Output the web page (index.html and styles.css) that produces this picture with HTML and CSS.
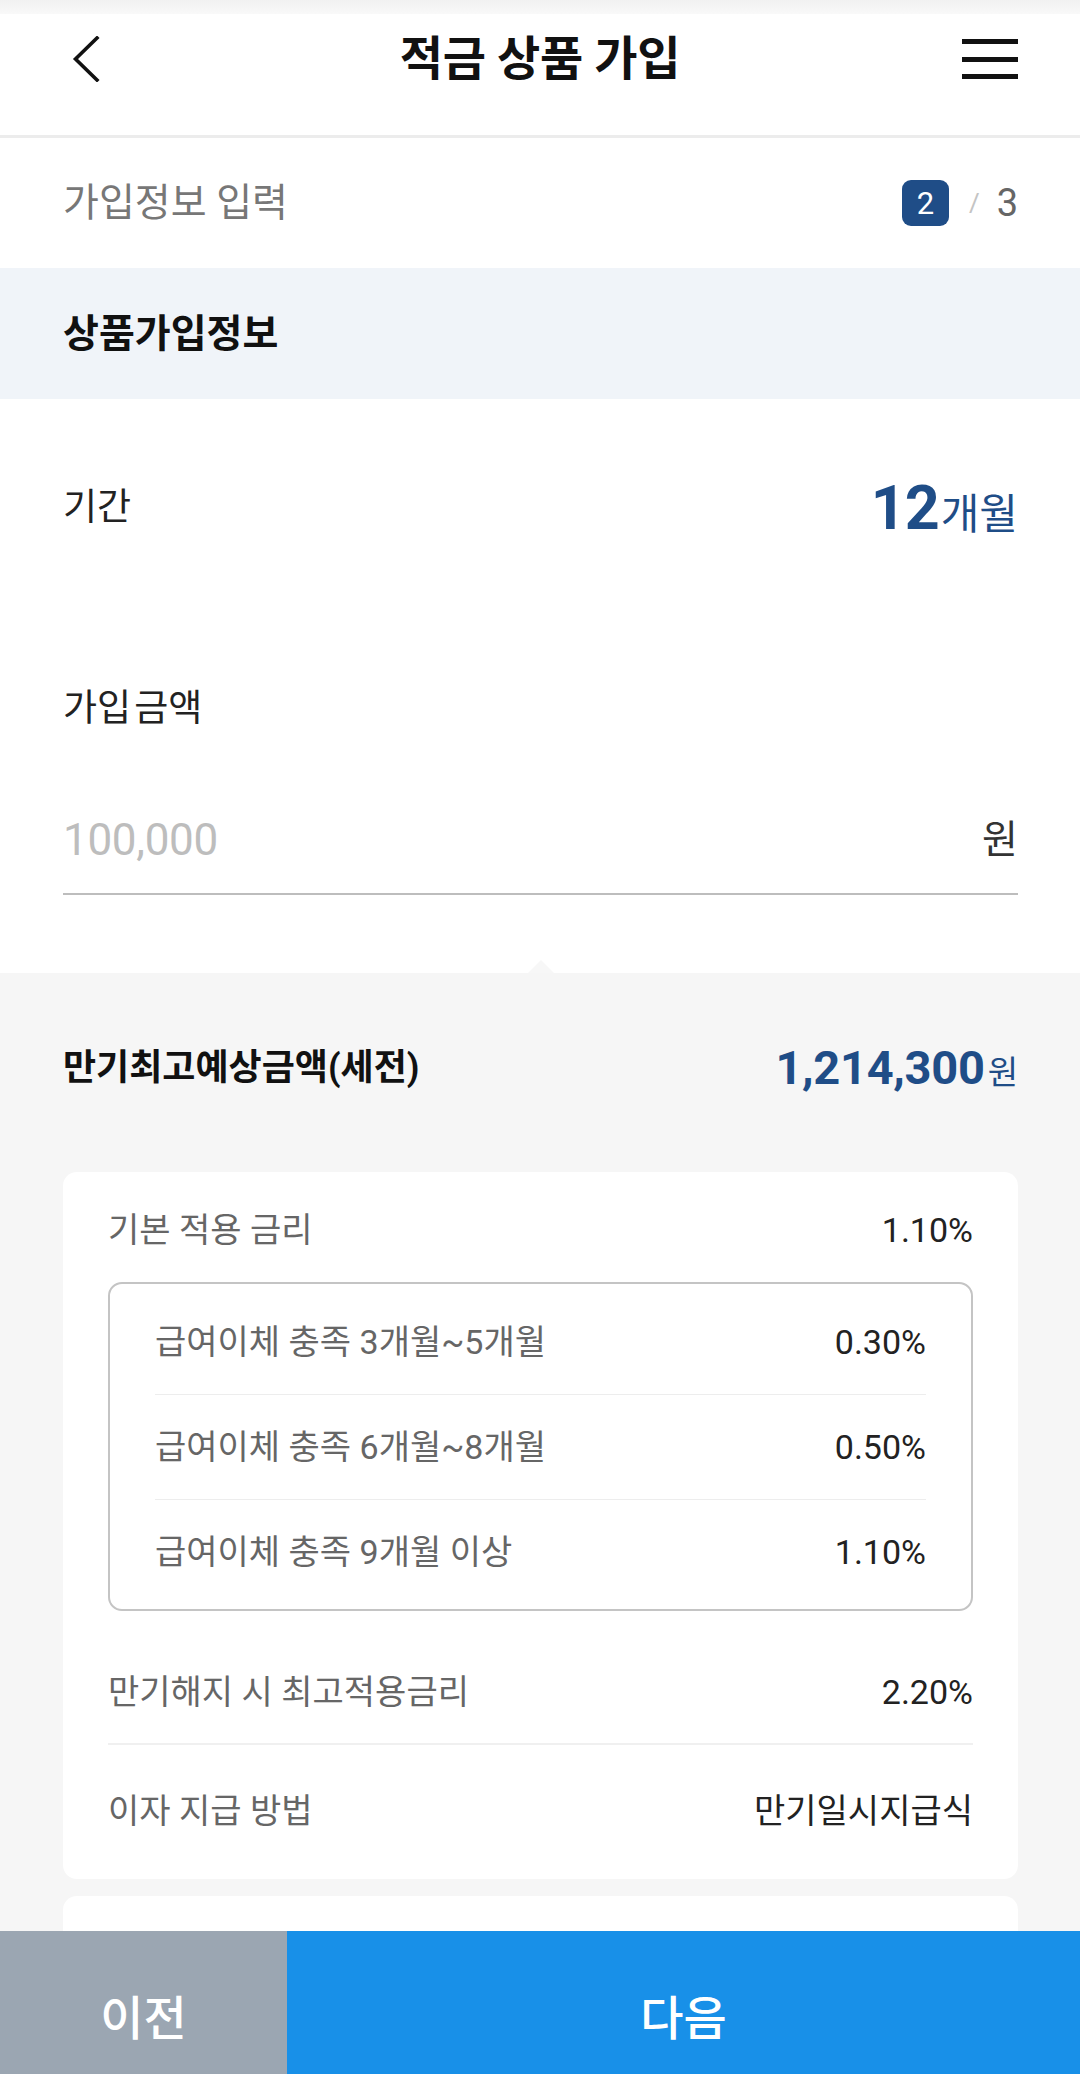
FILE: index.html
```html
<!DOCTYPE html>
<html lang="ko">
<head>
<meta charset="utf-8">
<title>적금 상품 가입</title>
<link rel="stylesheet" href="styles.css">
</head>
<body>
<div class="statusbar"></div>
<header class="topbar">
  <span class="icon back">
    <svg width="28" height="46" viewBox="0 0 28 46" aria-hidden="true"><path d="M25 2 L3.5 23 L25 44" fill="none" stroke="#111" stroke-width="3.6" stroke-linecap="square" stroke-linejoin="miter"/></svg>
  </span>
  <h1 class="title">적금 상품 가입</h1>
  <span class="icon menu">
    <svg width="56" height="40" viewBox="0 0 56 40" aria-hidden="true"><rect x="0" y="0" width="56" height="5" fill="#111"/><rect x="0" y="18" width="56" height="5" fill="#111"/><rect x="0" y="35" width="56" height="5" fill="#111"/></svg>
  </span>
</header>

<div class="step-row">
  <span class="step-label">가입정보 입력</span>
  <div class="step-count">
    <span class="step-badge">2</span>
    <span class="step-slash">/</span>
    <span class="step-total">3</span>
  </div>
</div>

<div class="section-band"><h2 class="section-title">상품가입정보</h2></div>

<section class="form">
  <div class="period-row">
    <span class="field-label">기간</span>
    <span class="period-value"><span class="num">12</span><span class="unit">개월</span></span>
  </div>
  <div class="amount-label">가입 금액</div>
  <div class="amount-input">
    <span class="placeholder">100,000</span>
    <span class="won">원</span>
  </div>
</section>

<section class="summary">
  <div class="maturity-row">
    <span class="maturity-label">만기최고예상금액(세전)</span>
    <span class="maturity-amount"><span class="num">1,214,300</span><span class="unit">원</span></span>
  </div>

  <div class="card">
    <div class="rate-row first">
      <span class="rate-label">기본 적용 금리</span>
      <span class="rate-value">1.10%</span>
    </div>
    <div class="bonus-box">
      <div class="bonus-row"><span class="rate-label">급여이체 충족 3개월~5개월</span><span class="rate-value">0.30%</span></div>
      <div class="bonus-row"><span class="rate-label">급여이체 충족 6개월~8개월</span><span class="rate-value">0.50%</span></div>
      <div class="bonus-row"><span class="rate-label">급여이체 충족 9개월 이상</span><span class="rate-value">1.10%</span></div>
    </div>
    <div class="rate-row max">
      <span class="rate-label">만기해지 시 최고적용금리</span>
      <span class="rate-value">2.20%</span>
    </div>
    <div class="rate-row last">
      <span class="rate-label">이자 지급 방법</span>
      <span class="rate-value ko">만기일시지급식</span>
    </div>
  </div>

  <div class="card card-next"></div>
</section>

<footer class="actions">
  <div class="btn btn-prev">이전</div>
  <div class="btn btn-next">다음</div>
</footer>
</body>
</html>
```

FILE: styles.css
```css
* { box-sizing: border-box; }

html, body {
  margin: 0;
  padding: 0;
}

body {
  width: 1080px;
  font-family: Roboto, "Noto Sans CJK KR", sans-serif;
  color: #222;
  background: #f6f6f6;
}

.statusbar {
  height: 14px;
  background: linear-gradient(#f1f1f1, #f9f9f9);
}

/* header */
.topbar {
  height: 124px;
  padding: 0 62px 31px 62px;
  background: #fff;
  border-bottom: 3px solid #ececec;
  display: grid;
  grid-template-columns: 1fr auto 1fr;
  align-items: center;
}

.icon {
  display: flex;
  align-items: center;
}

.icon.back {
  padding-left: 10px;
}

.icon.menu {
  justify-content: flex-end;
}

.title {
  margin: 0;
  font-size: 47px;
  font-weight: 700;
  line-height: 58px;
  color: #111;
  letter-spacing: -0.3px;
}

/* step indicator */
.step-row {
  height: 130px;
  padding: 0 62px 0 63px;
  background: #fff;
  display: flex;
  align-items: center;
  justify-content: space-between;
}

.step-label {
  font-size: 39px;
  line-height: 46px;
  color: #777;
}

.step-count {
  display: flex;
  align-items: center;
}

.step-badge {
  width: 47px;
  height: 46px;
  border-radius: 9px;
  background: #1f4d87;
  color: #fff;
  font-size: 31px;
  display: flex;
  align-items: center;
  justify-content: center;
}

.step-slash {
  font-size: 26px;
  color: #c4c4c4;
  margin: 0 17px 0 20px;
}

.step-total {
  font-size: 38px;
  color: #666;
  line-height: 44px;
}

/* section band */
.section-band {
  height: 131px;
  padding: 0 63px;
  background: #f0f4f9;
  display: flex;
  align-items: center;
}

.section-title {
  margin: 0;
  font-size: 39px;
  font-weight: 700;
  line-height: 46px;
  color: #111;
}

/* form */
.form {
  background: #fff;
  padding: 77px 62px 78px 63px;
}

.period-row {
  height: 64px;
  display: flex;
  align-items: center;
  justify-content: space-between;
}

.field-label {
  font-size: 37px;
  line-height: 44px;
  color: #222;
}

.period-value {
  display: flex;
  align-items: baseline;
  color: #1f4d87;
}

.period-value .num {
  font-size: 61px;
  font-weight: 700;
  line-height: 64px;
  letter-spacing: -1px;
}

.period-value .unit {
  font-size: 42px;
  margin-left: 2px;
}

.amount-label {
  margin-top: 147px;
  font-size: 37px;
  line-height: 44px;
  color: #222;
  word-spacing: -6px;
}

.amount-input {
  margin-top: 81px;
  height: 83px;
  padding-bottom: 25px;
  border-bottom: 2px solid #bdbdbd;
  display: flex;
  align-items: center;
  justify-content: space-between;
}

.placeholder {
  font-size: 44px;
  line-height: 56px;
  color: #bdbdbd;
  letter-spacing: -0.3px;
}

.won {
  font-size: 39px;
  line-height: 56px;
  color: #333;
}

/* summary */
.summary {
  position: relative;
  background: #f6f6f6;
  padding: 67px 62px 0 63px;
}

.summary::before {
  content: "";
  position: absolute;
  top: -13px;
  left: 528px;
  width: 0;
  height: 0;
  border-left: 13px solid transparent;
  border-right: 13px solid transparent;
  border-bottom: 13px solid #f7f7f7;
}

.maturity-row {
  height: 56px;
  display: flex;
  align-items: center;
  justify-content: space-between;
}

.maturity-label {
  font-size: 36px;
  font-weight: 700;
  line-height: 44px;
  color: #111;
}

.maturity-amount {
  display: flex;
  align-items: baseline;
  color: #1f4d87;
}

.maturity-amount .num {
  font-size: 47px;
  font-weight: 700;
  line-height: 56px;
  letter-spacing: -0.3px;
}

.maturity-amount .unit {
  font-size: 33px;
  margin-left: 3px;
}

.card {
  margin-top: 76px;
  background: #fff;
  border-radius: 14px;
  padding: 36px 45px 46px;
}

.rate-row {
  height: 44px;
  display: flex;
  align-items: center;
  justify-content: space-between;
  box-sizing: content-box;
}

.rate-row.max {
  padding-top: 59px;
  padding-bottom: 29px;
  border-bottom: 2px solid #f0f0f0;
}

.rate-row.last {
  padding-top: 44px;
}

.rate-label {
  font-size: 34px;
  line-height: 44px;
  color: #666;
}

.rate-value {
  font-size: 34px;
  line-height: 44px;
  color: #222;
}

.bonus-box {
  margin-top: 30px;
  border: 2px solid #c4c4c4;
  border-radius: 14px;
  padding: 6px 45px 5px;
}

.bonus-row {
  height: 105px;
  display: flex;
  align-items: center;
  justify-content: space-between;
  border-bottom: 1px solid #ededed;
}

.bonus-row:last-child {
  height: 104px;
  border-bottom: none;
}

.card-next {
  margin-top: 17px;
  height: 220px;
  padding: 0;
  border-radius: 14px 14px 0 0;
}

/* bottom actions */
.actions {
  position: fixed;
  left: 0;
  bottom: 0;
  width: 1080px;
  height: 143px;
  display: flex;
}

.btn {
  display: flex;
  align-items: center;
  justify-content: center;
  padding-top: 24px;
  color: #fff;
  font-size: 47px;
  font-weight: 500;
}

.btn-prev {
  width: 287px;
  background: #9ba6b2;
}

.btn-next {
  flex: 1;
  background: #1890e8;
}
```
